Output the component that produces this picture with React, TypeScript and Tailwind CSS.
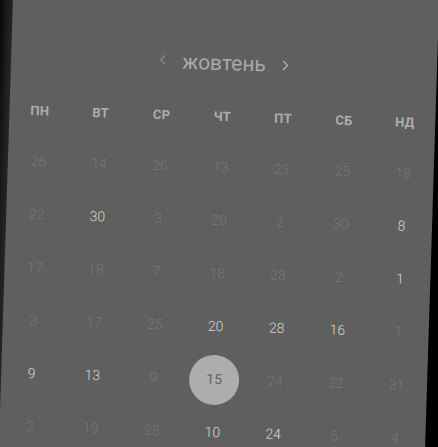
import React from 'react';

type Day = { n: number; tone?: 'faint' | 'bright' | 'selected' };

const HEADERS = ['ПН', 'ВТ', 'СР', 'ЧТ', 'ПТ', 'СБ', 'НД'];

// b = bright, s = selected, anything else is faint
const RAW: [number, string?][][] = [
  [[26], [14], [26], [13], [23], [25], [18]],
  [[22], [30, 'b'], [3], [20], [2], [30], [8, 'b']],
  [[17], [18], [7], [18], [28], [2], [1, 'b']],
  [[3], [17], [25], [20, 'b'], [28, 'b'], [16, 'b'], [1]],
  [[9, 'b'], [13, 'b'], [9], [15, 's'], [24], [22], [31]],
  [[2], [19], [28], [10, 'b'], [24, 'b'], [5], [4]],
];

const rows: Day[][] = RAW.map(r =>
  r.map(([n, t]) => ({ n, tone: t === 'b' ? 'bright' : t === 's' ? 'selected' : 'faint' }))
);

const Chevron = ({ dir, className }: { dir: 'left' | 'right'; className?: string }) => (
  <svg width="7" height="11" viewBox="0 0 7 11" className={className} fill="none">
    <path
      d={dir === 'left' ? 'M5.5 1.5L1.5 5.5L5.5 9.5' : 'M1.5 1.5L5.5 5.5L1.5 9.5'}
      stroke="currentColor"
      strokeWidth="1.5"
      strokeLinecap="round"
      strokeLinejoin="round"
    />
  </svg>
);

const DayCell = ({ day }: { day: Day }) => {
  if (day.tone === 'selected') {
    return (
      <div className="flex items-center justify-center h-[53px]">
        <div className="w-[50px] h-[50px] rounded-full bg-[#adadad] flex items-center justify-center text-[14px] text-[#636363]">
          {day.n}
        </div>
      </div>
    );
  }
  return (
    <div
      className={
        'flex items-center justify-center h-[53px] text-[14px] font-light ' +
        (day.tone === 'bright' ? 'text-[#d6d6d6]' : 'text-[#777777]')
      }
    >
      {day.n}
    </div>
  );
};

export default function App() {
  return (
    <div className="w-full h-[447px] bg-black overflow-hidden flex items-center justify-center">
      <div
        className="shrink-0 w-[426px] h-[600px] bg-[#5f5f5f] rotate-[1.8deg] pt-[123px] shadow-[-10px_0_12px_-2px_rgba(45,45,45,0.9)]"
        style={{ fontFamily: 'Roboto, "Noto Sans", sans-serif' }}
      >
        <div className="h-8 flex items-center justify-center gap-4">
          <Chevron dir="left" className="text-[#858585] -mt-1" />
          <span className="text-[21px] text-[#a9a9a9] leading-none">жовтень</span>
          <Chevron dir="right" className="text-[#ababab]" />
        </div>

        <div className="mt-[28px] grid grid-cols-7 h-5">
          {HEADERS.map(h => (
            <div key={h} className="flex items-center justify-center text-[13px] font-bold tracking-wide text-[#adadad]">
              {h}
            </div>
          ))}
        </div>

        <div className="mt-[14px] flex flex-col">
          {rows.map((row, i) => (
            <div key={i} className="grid grid-cols-7">
              {row.map((d, j) => (
                <DayCell key={j} day={d} />
              ))}
            </div>
          ))}
        </div>
      </div>
    </div>
  );
}
